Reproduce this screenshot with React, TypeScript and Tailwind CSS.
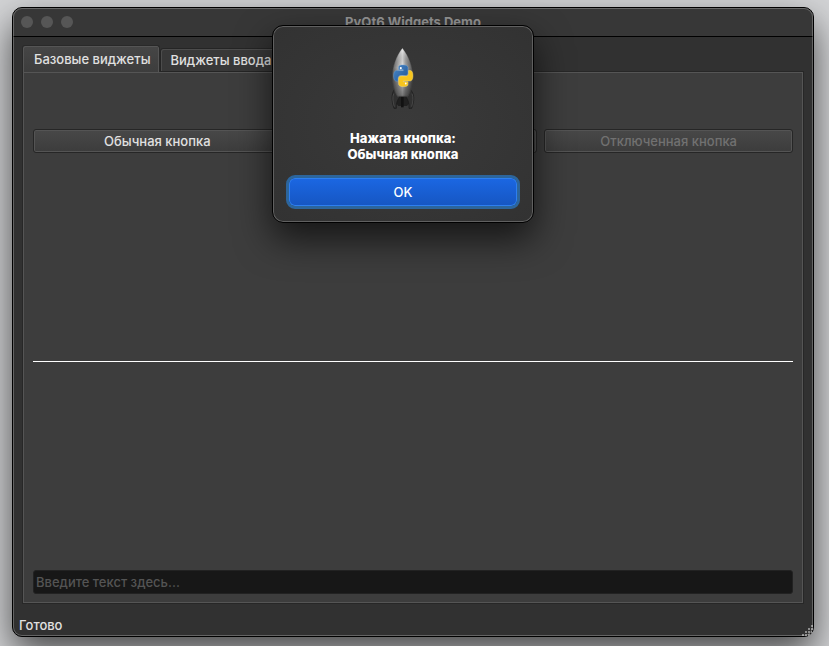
import React, { useState } from 'react';

const TABS = ['Базовые виджеты', 'Виджеты ввода'];

const SNAKE =
  'M14.25.18l.9.2.73.26.59.3.45.32.34.34.25.34.16.33.1.3.04.26.02.2-.01.13V8.5l-.05.63-.13.55-.21.46-.26.38-.3.31-.33.25-.35.19-.35.14-.33.1-.3.07-.26.04-.21.02H8.77l-.69.05-.59.14-.5.22-.41.27-.33.32-.27.35-.2.36-.15.37-.1.35-.07.32-.04.27-.02.21v3.06H3.17l-.21-.03-.28-.07-.32-.12-.35-.18-.36-.26-.36-.36-.35-.46-.32-.59-.28-.73-.21-.88-.14-1.05-.05-1.23.06-1.22.16-1.04.24-.87.32-.71.36-.57.4-.44.42-.33.42-.24.4-.16.36-.1.32-.05.24-.01h.16l.06.01h8.16v-.83H6.18l-.01-2.75-.02-.37.05-.34.11-.31.17-.28.25-.26.31-.23.38-.2.44-.18.51-.15.58-.12.64-.1.71-.06.77-.04.84-.02 1.27.05z';

const RocketIcon: React.FC = () => (
  <svg width="26" height="64" viewBox="90 18 78 192" aria-hidden="true">
    <defs>
      <linearGradient id="hull" x1="0" x2="1" y1="0" y2="0">
        <stop offset="0" stopColor="#5c5c5c" />
        <stop offset="0.3" stopColor="#b4b4b4" />
        <stop offset="0.5" stopColor="#e4e4e4" />
        <stop offset="0.65" stopColor="#a8a8a8" />
        <stop offset="1" stopColor="#525252" />
      </linearGradient>
      <linearGradient id="shade" x1="0" x2="0" y1="0" y2="1">
        <stop offset="0" stopColor="#fff" stopOpacity="0.5" />
        <stop offset="0.4" stopColor="#000" stopOpacity="0" />
        <stop offset="1" stopColor="#000" stopOpacity="0.5" />
      </linearGradient>
      <linearGradient id="blue" x1="0" x2="1" y1="0" y2="1">
        <stop offset="0" stopColor="#4a88c8" />
        <stop offset="1" stopColor="#1f5596" />
      </linearGradient>
    </defs>
    {/* сопло и стабилизаторы */}
    <path d="M111 164h34l3 26-7 8h-26l-7-8z" fill="#202020" />
    <path d="M123 170h8v32h-8z" fill="#121212" />
    <path d="M103 149c-9 13-9 32-1 56h7c-1-15 3-25 10-34l-7-18z" fill="#303030" stroke="#181818" strokeWidth="2" />
    <path d="M151 149c13 13 13 32 4 56h-8c1-15-2-25-9-34l7-18z" fill="#303030" stroke="#181818" strokeWidth="2" />
    <path d="M101 161c-4 11-3 24 2 39M156 161c5 11 3 24-1 39" fill="none" stroke="#555" strokeWidth="2" />
    {/* корпус */}
    <path d="M127 25C108 51 97 79 97 108c0 25 5 45 15 61h32c9-16 14-36 14-61 0-29-11-57-31-83z" fill="url(#hull)" stroke="#454545" strokeWidth="1" />
    <path d="M127 25C108 51 97 79 97 108c0 25 5 45 15 61h32c9-16 14-36 14-61 0-29-11-57-31-83z" fill="url(#shade)" />
    <g transform="translate(101 75) scale(2.4 2.7)">
      <path d={SNAKE} fill="url(#blue)" stroke="#6fa5da" strokeWidth="0.5" />
      <path d={SNAKE} transform="rotate(180 12 12)" fill="#f7c51e" stroke="#ffe783" strokeWidth="0.5" />
      <circle cx="8.9" cy="3.4" r="1.3" fill="#fff" />
      <circle cx="15.1" cy="20.6" r="1.1" fill="#fff" />
    </g>
  </svg>
);

const SizeGrip: React.FC = () => (
  <svg width="11" height="11" viewBox="0 0 11 11" fill="#8c8c8c" shapeRendering="crispEdges" aria-hidden="true">
    <path d="M9 0h2v2H9zM6 3h2v2H6zM9 3h2v2H9zM3 6h2v2H3zM6 6h2v2H6zM9 6h1v2H9zM0 9h2v2H0zM3 9h2v2H3zM6 9h2v2H6z" />
  </svg>
);

const PushButton: React.FC<React.ButtonHTMLAttributes<HTMLButtonElement>> = (props) => (
  <button
    type="button"
    className="h-6 rounded-[3px] border border-[#262626] bg-linear-to-b from-[#484848] to-[#3c3c3c] text-[#e0e0e0] inset-ring inset-ring-[#545454] disabled:text-[#717171]"
    {...props}
  />
);

const App: React.FC = () => {
  const [tab, setTab] = useState(0);
  const [message, setMessage] = useState('Обычная кнопка');
  const [text, setText] = useState('');

  return (
    <div className="flex min-h-screen flex-col bg-[#d3d4d6] pt-[7px] pr-[15px] pb-[9px] pl-3 font-[Inter,sans-serif] text-[13px] leading-4 font-medium text-[#e0e0e0]">
      <div className="relative flex flex-1 flex-col rounded-[10px] border border-black bg-[#313131] shadow-[0_16px_36px_rgba(0,0,0,0.65)]">
        <header className="flex h-[29px] items-center rounded-t-[9px] border-b border-black bg-[#373737] px-2">
          <div className="flex flex-1 gap-2">
            <span className="size-3 rounded-full bg-[#565656]" />
            <span className="size-3 rounded-full bg-[#565656]" />
            <span className="size-3 rounded-full bg-[#565656]" />
          </div>
          <h1 className="font-bold text-[#949494]">PyQt6 Widgets Demo</h1>
          <div className="flex-1" />
        </header>

        <main className="flex flex-1 flex-col px-[9px] pt-2">
          <div role="tablist" className="z-1 -mb-px flex items-end">
            {TABS.map((name, i) => (
              <button
                key={name}
                type="button"
                role="tab"
                aria-selected={tab === i}
                onClick={() => setTab(i)}
                className={
                  tab === i
                    ? 'h-[27px] rounded-t-[3px] border-x border-t border-[#292929] bg-linear-to-b from-[#464646] to-[#3d3d3d] pr-2 pl-[11px] shadow-[inset_1px_1px_#555,inset_-1px_0_#555]'
                    : 'h-6 rounded-t-[3px] border border-[#252525] bg-[#383838] px-[10px] shadow-[inset_1px_1px_#4c4c4c,inset_-1px_0_#4c4c4c]'
                }
              >
                {name}
              </button>
            ))}
          </div>

          <section className="flex flex-1 flex-col border border-[#272727] bg-[#3d3d3d] px-[10px] pt-[57px] pb-[9px] inset-ring inset-ring-[#555]">
            <div className="grid grid-cols-3 gap-[7px]">
              <PushButton onClick={() => setMessage('Обычная кнопка')}>Обычная кнопка</PushButton>
              <PushButton />
              <PushButton disabled>Отключенная кнопка</PushButton>
            </div>
            <div className="flex flex-1 items-center">
              <hr className="flex-1 border-t border-white" />
            </div>
            <input
              type="text"
              aria-label="Введите текст здесь..."
              placeholder="Введите текст здесь..."
              value={text}
              onChange={(e) => setText(e.target.value)}
              className="h-6 rounded-[3px] border border-[#222] bg-[#171717] px-0.5 outline-none placeholder:text-[#545454]"
            />
          </section>
        </main>

        <footer className="flex h-8 items-center pt-3 pb-0.5 pl-1.5">
          <span>Готово</span>
        </footer>
        <div className="absolute right-0 bottom-0">
          <SizeGrip />
        </div>
        {/* светлая кромка окна */}
        <div className="pointer-events-none absolute inset-0 rounded-[9px] inset-ring inset-ring-white/25" />

        {message && (
          <div
            role="alertdialog"
            aria-labelledby="msg"
            className="absolute top-[17px] left-[259px] z-10 flex w-[262px] flex-col items-center rounded-[11px] border border-black bg-radial from-[#3a3a3a] to-[#323232] px-[13px] pt-5 pb-[13px] inset-ring inset-ring-[#606060] shadow-[0_16px_36px_rgba(0,0,0,0.65)]"
          >
            <RocketIcon />
            <p id="msg" className="mt-5 text-center font-extrabold text-white">
              Нажата кнопка:
              <br />
              {message}
            </p>
            <button
              type="button"
              onClick={() => setMessage('')}
              className="mt-[13px] h-[34px] w-full rounded-[9px] border-3 border-[#2c659c] bg-linear-to-b from-[#1b67e3] to-[#1656c2] bg-clip-padding text-white inset-ring inset-ring-[#2e7ff0] outline-none"
            >
              OK
            </button>
          </div>
        )}
      </div>
    </div>
  );
};

export default App;
